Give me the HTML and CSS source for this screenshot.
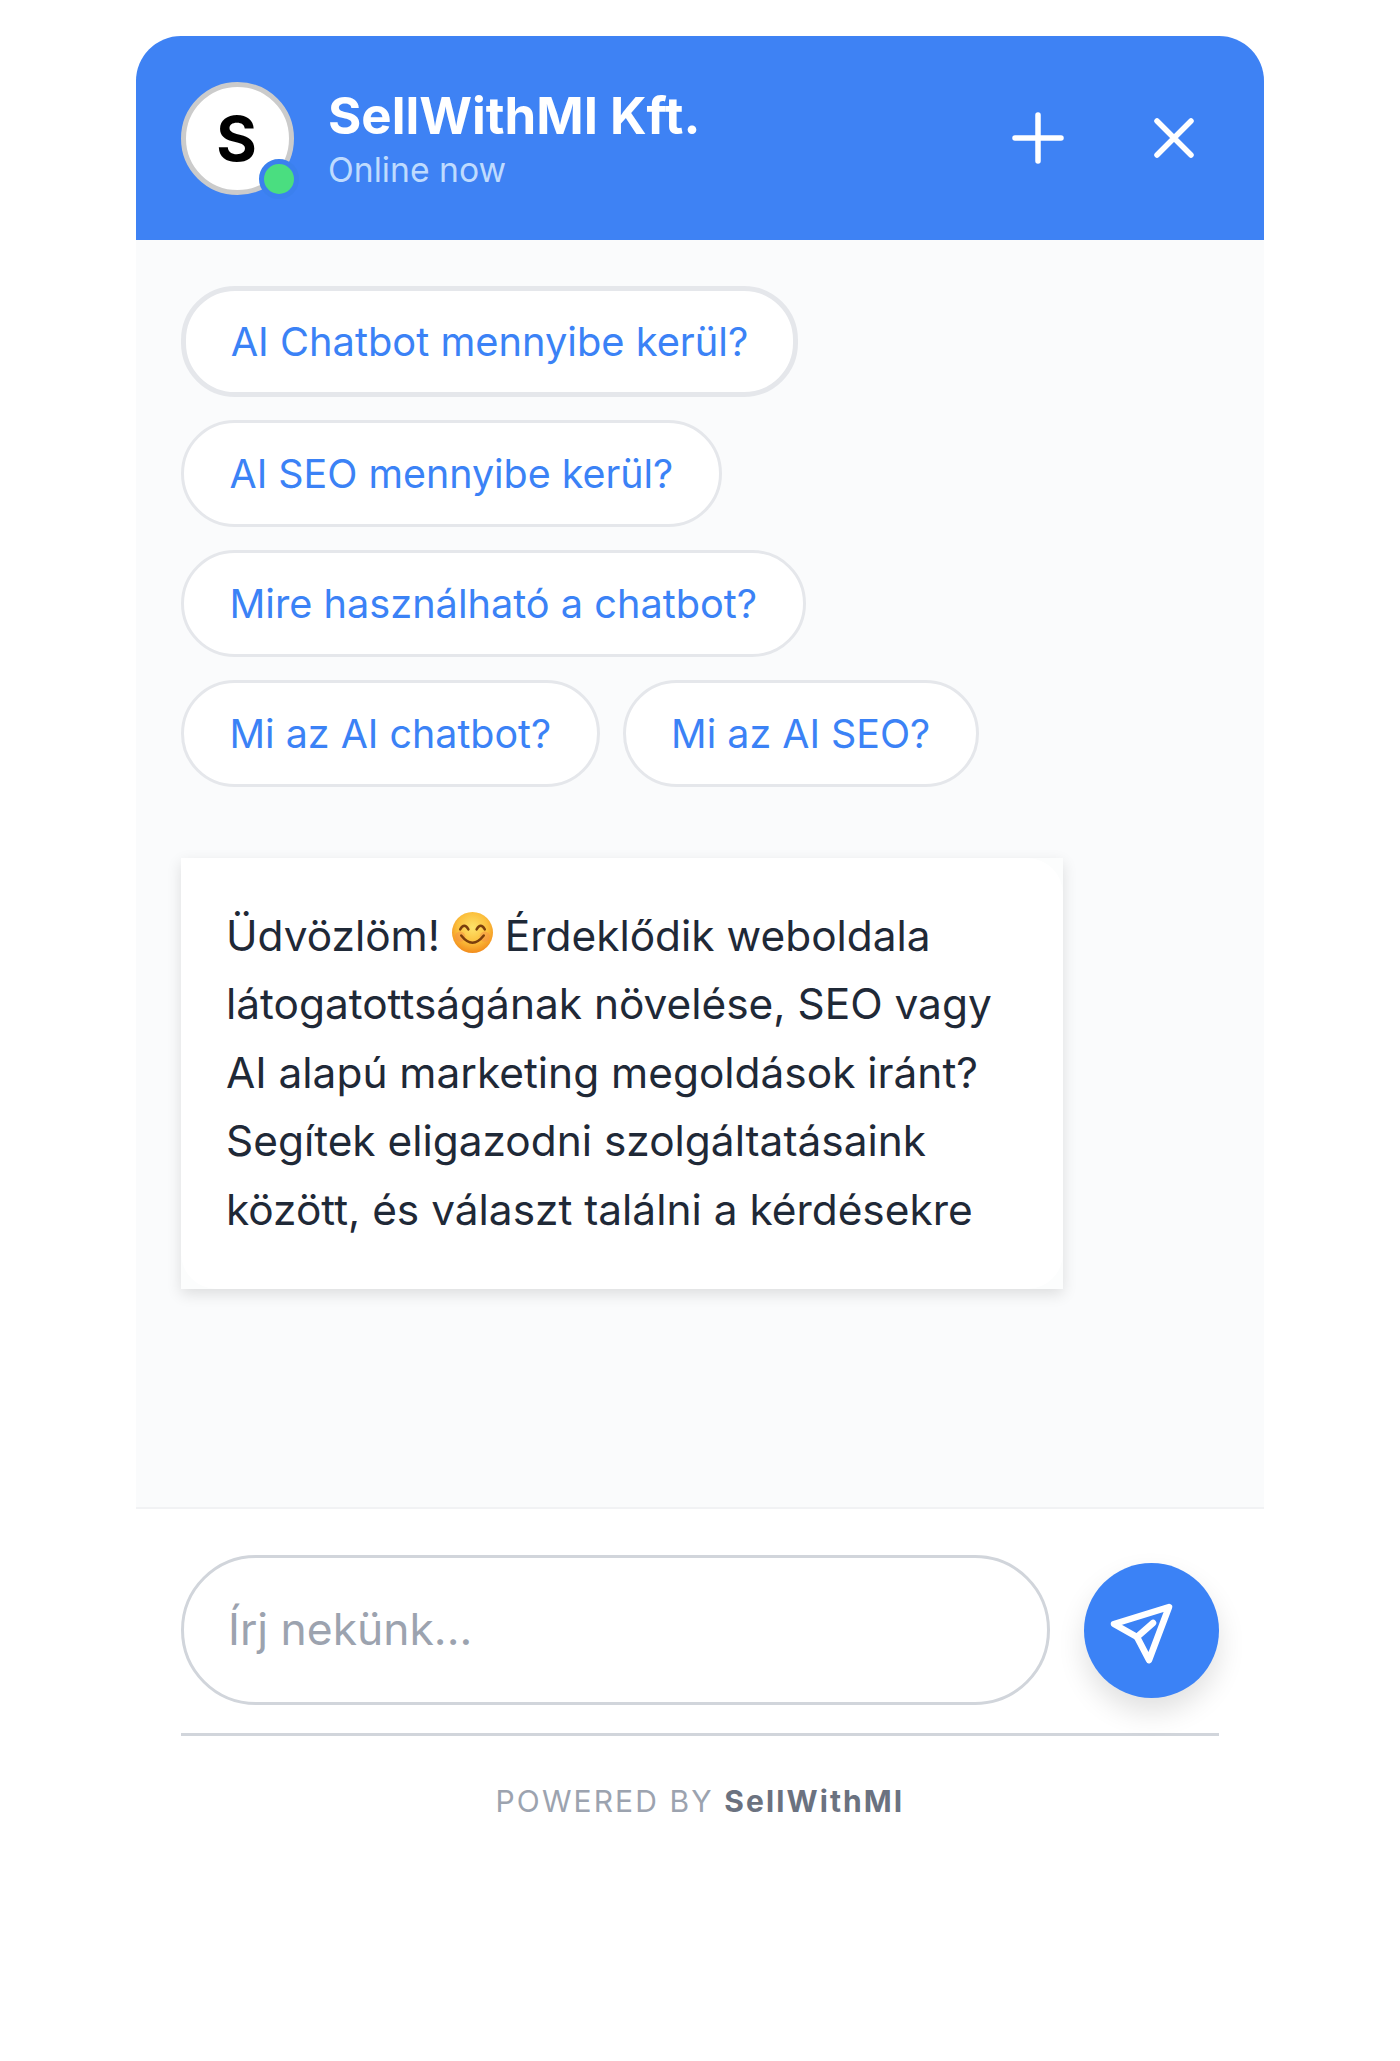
FILE: index.html
```html
<!DOCTYPE html>
<html lang="en">
<head>
    <meta charset="UTF-8">
    <meta name="viewport" content="width=device-width, initial-scale=1.0">
    <title>SellWithMI Chat</title>
    <link rel="stylesheet" href="styles.css">
</head>
<body>
<div class="widget">
    <header class="chat-header">
        <div class="avatar">
            <span class="avatar-letter">S</span>
            <span class="status-dot"></span>
        </div>
        <div class="header-info">
            <h1 class="company">SellWithMI Kft.</h1>
            <div class="status-text">Online now</div>
        </div>
        <div class="header-actions">
            <button class="icon-btn" type="button" aria-label="New chat">
                <svg width="54" height="54" viewBox="0 0 54 54"><path d="M27 4V50M4 27H50"/></svg>
            </button>
            <button class="icon-btn" type="button" aria-label="Close">
                <svg width="54" height="54" viewBox="0 0 54 54"><path d="M10 10L44 44M44 10L10 44"/></svg>
            </button>
        </div>
    </header>

    <main class="chat-body">
        <div class="chips">
            <button class="chip chip-focus" type="button">AI Chatbot mennyibe kerül?</button>
            <button class="chip" type="button">AI SEO mennyibe kerül?</button>
            <button class="chip chip-long" type="button">Mire használható a chatbot?</button>
            <button class="chip" type="button">Mi az AI chatbot?</button>
            <button class="chip" type="button">Mi az AI SEO?</button>
        </div>
        <div class="bubble">
            <div class="bubble-inner">
                Üdvözlöm!
                <svg class="emoji" viewBox="0 0 40 40" role="img" aria-label="smile">
                    <defs>
                        <radialGradient id="face" cx="50%" cy="38%" r="62%">
                            <stop offset="0" stop-color="#fde36a"/>
                            <stop offset="0.6" stop-color="#fbbf3c"/>
                            <stop offset="1" stop-color="#f28c1c"/>
                        </radialGradient>
                    </defs>
                    <circle cx="20" cy="20" r="20" fill="url(#face)"/>
                    <circle cx="8" cy="24" r="5" fill="#f58a4a" opacity="0.45"/>
                    <circle cx="32" cy="24" r="5" fill="#f58a4a" opacity="0.45"/>
                    <path class="emoji-line" d="M8 17Q12 10 16 17M24 17Q28 10 32 17"/>
                    <path class="emoji-line" d="M9 23Q20 37 31 23"/>
                </svg>
                Érdeklődik weboldala látogatottságának növelése, SEO vagy AI alapú marketing megoldások iránt? Segítek eligazodni szolgáltatásaink között, és választ találni a kérdésekre
            </div>
        </div>
    </main>

    <footer class="chat-footer">
        <div class="input-row">
            <input class="chat-input" type="text" placeholder="Írj nekünk...">
            <button class="send-btn" type="button" aria-label="Send">
                <svg width="90" height="90" viewBox="0 0 90 90">
                    <path d="M62 22L7 39L30 52L42 75Z"/>
                    <path d="M46 38L30 52"/>
                </svg>
            </button>
        </div>
        <div class="powered">POWERED BY <strong>SellWithMI</strong></div>
    </footer>
</div>
</body>
</html>
```

FILE: styles.css
```css
* {
    box-sizing: border-box;
}
body {
    margin: 0;
    background-color: #fff;
    font-family: Inter, "Liberation Sans", sans-serif;
}
.widget {
    width: 1128px;
    margin: 36px auto 0;
}
.chat-header {
    height: 204px;
    padding: 0 45px;
    display: flex;
    align-items: center;
    background-color: #3e82f4;
    border-radius: 45px 45px 0 0;
}
.avatar {
    position: relative;
    width: 113px;
    height: 113px;
    border: 5px solid #cbcbcb;
    border-radius: 50%;
    background-color: #fff;
    display: flex;
    align-items: center;
    justify-content: center;
    flex-shrink: 0;
}
.avatar-letter {
    margin-right: 2px;
    font-size: 62px;
    font-weight: 700;
    color: #000;
}
.status-dot {
    position: absolute;
    right: -10px;
    bottom: -9px;
    width: 40px;
    height: 40px;
    background-color: #4ade80;
    border: 5.5px solid #3b80ee;
    border-radius: 50%;
}
.header-info {
    margin-left: 34px;
    flex: 1;
}
.company {
    margin: 0;
    font-size: 50.9px;
    line-height: 60px;
    font-weight: 700;
    color: #fff;
}
.status-text {
    margin-top: 3px;
    font-size: 33.7px;
    line-height: 42px;
    color: #bfdbfe;
}
.header-actions {
    display: flex;
    align-items: center;
    gap: 82px;
    margin-right: 18px;
}
.icon-btn {
    padding: 0;
    border: none;
    background: none;
    display: flex;
}
.icon-btn path {
    fill: none;
    stroke: #fff;
    stroke-width: 5.5;
    stroke-linecap: round;
}
.chat-body {
    height: 1269px;
    padding: 46px 45px 0;
    background-color: #fafbfc;
    border-bottom: 2px solid #f1f2f4;
}
.chips {
    display: flex;
    flex-wrap: wrap;
    gap: 23px;
    width: 1000px;
}
.chip {
    height: 107px;
    padding: 0 45.5px;
    font-family: inherit;
    font-size: 39.4px;
    color: #3b82f6;
    background-color: #fff;
    border: 3px solid #e5e7eb;
    border-radius: 54px;
}
.chip-long {
    font-size: 39.7px;
}
.chip-focus {
    height: 111px;
    border-width: 5px;
    flex-basis: 617px;
    padding: 0;
    font-size: 39.8px;
    margin-right: 380px;
}
.bubble {
    width: 882px;
    margin-top: 71px;
    background-color: #fcfdfd;
    box-shadow: 0 5px 14px rgba(0, 0, 0, 0.12);
}
.bubble-inner {
    padding: 44px 45px 45px;
    font-size: 42.4px;
    line-height: 68.4px;
    color: #1f2937;
    background-color: #fff;
    border-radius: 0 36px 36px 36px;
}
.emoji {
    width: 41px;
    height: 41px;
    vertical-align: -2px;
}
.emoji-line {
    fill: none;
    stroke: #7a3e0c;
    stroke-width: 2.4;
    stroke-linecap: round;
}
.chat-footer {
    padding: 46px 45px 0;
    background-color: #fff;
}
.input-row {
    display: flex;
    align-items: center;
    justify-content: space-between;
    padding-bottom: 28px;
    border-bottom: 3px solid #d1d5db;
}
.chat-input {
    width: 869px;
    height: 150px;
    padding: 0 44px 2px;
    font-family: inherit;
    font-size: 44.4px;
    color: #1f2937;
    background-color: #fff;
    border: 3px solid #d1d5db;
    border-radius: 75px;
    outline: none;
}
.chat-input::placeholder {
    color: #9ca3af;
}
.send-btn {
    width: 135px;
    height: 135px;
    padding: 0;
    border: none;
    border-radius: 50%;
    background-color: #3b82f6;
    display: flex;
    align-items: center;
    justify-content: center;
    box-shadow: 0 14px 28px rgba(0, 0, 0, 0.12);
}
.send-btn path {
    fill: none;
    stroke: #fff;
    stroke-width: 6.5;
    stroke-linecap: round;
    stroke-linejoin: round;
}
.powered {
    margin-top: 47px;
    text-align: center;
    font-size: 30px;
    letter-spacing: 2.1px;
    color: #9ca3af;
}
.powered strong {
    font-weight: 700;
    color: #6b7280;
}
```
